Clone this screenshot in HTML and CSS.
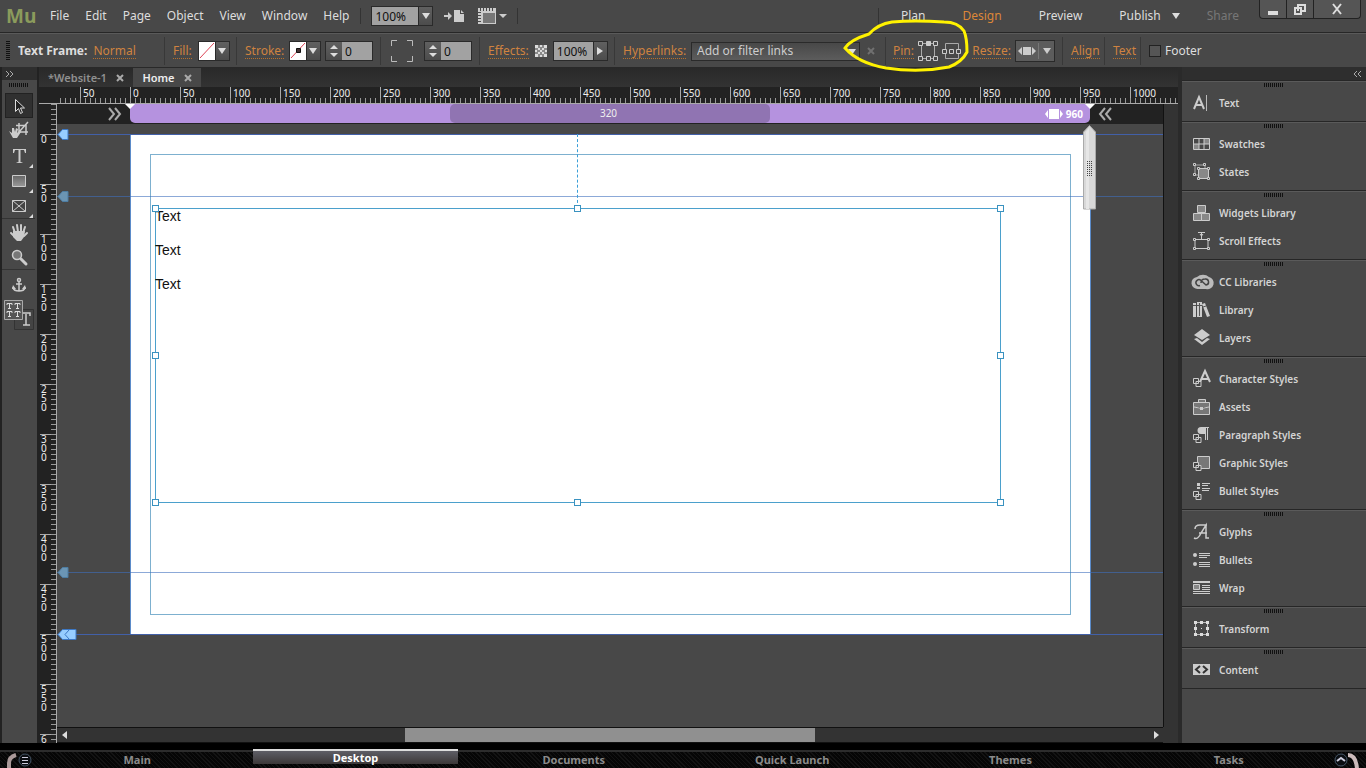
FILE: index.html
```html
<!DOCTYPE html>
<html lang="en">
<head>
<meta charset="utf-8">
<title>Muse - Website-1</title>
<link rel="stylesheet" href="styles.css">
</head>
<body>
<header class="menubar">
  <span class="logo">Mu</span>
  <nav class="menus">
    <button>File</button><button>Edit</button><button>Page</button><button>Object</button><button>View</button><button>Window</button><button>Help</button>
  </nav>
  <div class="zoombox">
    <input class="field zoomfield" aria-label="Zoom" value="100%">
    <button class="drop" aria-label="Zoom levels"><svg width="8" height="6"><path d="M0 0h8L4 6z"/></svg></button>
  </div>
  <div class="menu-icons">
    <button aria-label="Place file"><svg width="20" height="14" class="ic"><path d="M0 6h4V3l4 4-4 4V8H0zM10 1h6v4h4v8H10zM17 1l3 3h-3z"/></svg></button>
    <button aria-label="View options"><svg width="30" height="16" class="ic"><path fill-rule="evenodd" d="M0 0h18v16H0zM5 5v10h12V5zM2 0h1v3H2zM5 0h1v3H5zM8 0h1v3H8zM11 0h1v3h-1zM14 0h1v3h-1zM0 4h3v1H0zM0 7h3v1H0zM0 10h3v1H0zM0 13h3v1H0z"/><path d="M5 5h12v10H5z" fill="#777"/><path d="M21 6h8l-4 4z"/></svg></button>
  </div>
  <div class="modes">
    <button>Plan</button><button class="on">Design</button><button>Preview</button><button>Publish<svg width="8" height="6"><path d="M0 0h8L4 6z"/></svg></button><button class="off">Share</button>
  </div>
  <div class="winbtns">
    <button aria-label="Minimize"><svg width="12" height="14"><path d="M1 9h10v4H1z"/></svg></button>
    <button aria-label="Restore"><svg width="14" height="14"><path fill="none" stroke="#ddd" stroke-width="2" d="M5 9V3h7v6H8M2 6h6v6H2z"/></svg></button>
    <button aria-label="Close" class="wide"><svg width="12" height="12"><path fill="none" stroke="#ddd" stroke-width="2" d="M2 1l8 10M10 1L2 11"/></svg></button>
  </div>
</header>

<section class="control">
  <div class="group g-frame"><i class="vgrip"></i><b>Text Frame:</b><a href="#">Normal</a></div>
  <div class="group g-fill"><a href="#">Fill:</a>
    <div class="combo"><span class="swatch"><svg width="16" height="18"><path d="M1 16L15 1" stroke="#d45" fill="none"/></svg></span><button class="drop" aria-label="Fill"><svg width="8" height="6"><path d="M0 0h8L4 6z"/></svg></button></div></div>
  <div class="group g-stroke"><a href="#">Stroke:</a>
    <div class="combo"><span class="swatch"><svg width="16" height="18"><path d="M1 16L15 1" stroke="#d45" fill="none"/><path d="M6.500 6.500h4v4h-4z" fill="#433" stroke="#111"/></svg></span><button class="drop" aria-label="Stroke"><svg width="8" height="6"><path d="M0 0h8L4 6z"/></svg></button></div>
    <div class="combo"><button class="drop step" aria-label="Stroke width steps"><svg width="8" height="14"><path d="M0 5l4-4 4 4zM0 9h8l-4 4z"/></svg></button><input class="field num" aria-label="Stroke width" value="0"></div></div>
  <div class="group g-corner"><svg width="24" height="24"><path fill="none" stroke="#bbb" d="M1.500 7V1.500H7M17 1.500h5.500V7M1.500 17v5.500H7M17 22.500h5.500V17"/></svg>
    <div class="combo"><button class="drop step" aria-label="Corner radius steps"><svg width="8" height="14"><path d="M0 5l4-4 4 4zM0 9h8l-4 4z"/></svg></button><input class="field num" aria-label="Corner radius" value="0"></div></div>
  <div class="group g-fx"><a href="#">Effects:</a><svg width="12" height="12"><path fill="#8a8a8a" d="M0 0h12v12H0z"/><path fill="#ddd" d="M0 0h3v3H0zM5 0h2v2H5zM9 0h3v3H9zM3 3h2v2H3zM7 3h2v2H7zM0 5h2v2H0zM5 5h2v2H5zM10 5h2v2h-2zM3 7h2v2H3zM7 7h2v2H7zM0 9h3v3H0zM5 10h2v2H5zM9 9h3v3H9z"/></svg>
    <div class="combo"><input class="field pct" aria-label="Opacity" value="100%"><button class="drop" aria-label="Opacity slider"><svg width="6" height="8"><path d="M0 0l6 4-6 4z"/></svg></button></div></div>
  <div class="group g-link"><a href="#" id="hl">Hyperlinks:</a>
    <span class="linkbox"><select class="links" aria-labelledby="hl"><option>Add or filter links</option></select></span>
    <button class="clear" aria-label="Remove link"><svg width="8" height="8"><path fill="none" stroke="#707070" stroke-width="2" d="M1 1l6 6M7 1L1 7"/></svg></button></div>
  <div class="group g-pin"><a href="#">Pin:</a>
    <svg width="20" height="20"><g fill="none" stroke="#ccc"><path d="M5 2.500h10M5 17.500h10M3.500 5v10M16.500 5v10" stroke="#aaa"/><path d="M.5.500h4v4h-4zM15.500.500h4v4h-4zM.5 15.500h4v4h-4zM15.500 15.500h4v4h-4zM8.500 15.500h4v4h-4z" fill="#484848"/><path d="M8.500.500h4v4h-4z" fill="#ccc"/></g></svg>
    <svg width="20" height="20"><g fill="none" stroke="#ccc"><path d="M3.500 8V2.500h13V8M3.500 12v5.500h13V12" stroke="#aaa"/><path d="M.5 8.500h4v4h-4zM7.500 8.500h4v4h-4zM14.500 8.500h4v4h-4z"/></g></svg>
    <a href="#" class="resize">Resize:</a>
    <button class="resizebtn" aria-label="Resize mode"><svg width="34" height="18"><path fill="#ccc" d="M5 5h8v8H5zM0 9l4-4v8zM18 9l-4-4v8z"/><path stroke="#777" d="M20.500 1v16"/><path fill="#ccc" d="M25 6h8l-4 6z"/></svg></button></div>
  <div class="group g-align"><a href="#">Align</a></div>
  <div class="group g-text"><a href="#">Text</a></div>
  <div class="group g-footer"><label><input type="checkbox">Footer</label></div>
</section>

<main class="work">
  <aside class="tools">
    <div class="strip"><svg width="8" height="6"><path d="M0 0l3 3-3 3M4 0l3 3-3 3" fill="none" stroke="#aaa"/></svg></div>
    <i class="grip"></i>
    <button class="sel" aria-label="Selection"><svg width="20" height="20"><path d="M6.500 3.500v12l3-3 2 5 2-1-2-4.500h4z" fill="#222" stroke="#ddd"/></svg></button>
    <button aria-label="Crop"><svg width="22" height="20"><path d="M11 2v9h9M8 4.500h10V14M20 1l-9 10" fill="none" stroke="#ccc" stroke-width="1.500"/><path fill="#ccc" d="M1 10l3 2V7h2l1 4 1-4 2 1-1 4 2-2 2 1-4 6H5z"/></svg></button>
    <button aria-label="Text" class="more"><svg width="20" height="20"><path fill="#ccc" d="M4 3h13v4h-1l-1-3h-3.500v12l2 .5v.5H7.500v-.5l2-.5V4H6L5 7H4z"/></svg></button>
    <button aria-label="Rectangle" class="more"><svg width="20" height="20"><defs><linearGradient id="rg" x2="0" y2="1"><stop stop-color="#666"/><stop offset="1" stop-color="#999"/></linearGradient></defs><path d="M3.500 4.500h13v11h-13z" fill="url(#rg)" stroke="#ccc"/></svg></button>
    <button aria-label="Rectangle frame" class="more"><svg width="20" height="20"><path d="M3.500 4.500h13v11h-13zl13 11M16.500 4.500l-13 11" fill="#444" stroke="#ccc"/></svg></button>
    <hr>
    <button aria-label="Hand"><svg width="20" height="20"><path fill="none" stroke="#ccc" stroke-width="2" stroke-linecap="round" d="M6 11L4 5M9 10L8 3M12 10V3M14 11l2-6M5 14l-3-3M15 14l3-3"/><path fill="#ccc" d="M4 9h12l-1 6-3 4H8l-4-4z"/></svg></button>
    <button aria-label="Zoom tool"><svg width="20" height="20"><circle cx="8" cy="8" r="4.500" fill="#777" stroke="#ccc" stroke-width="1.500"/><path d="M12 12l5 5" stroke="#ccc" stroke-width="3" stroke-linecap="round"/></svg></button>
    <hr>
    <button aria-label="Anchor" class="anchor"><svg width="20" height="20"><g fill="none" stroke="#ccc" stroke-width="1.500"><circle cx="10" cy="5" r="1.500"/><path d="M10 7v9M7 9h6M4 12v1q1 3 6 3t6-3v-1"/></g><path fill="#ccc" d="M3 14l1-4 3 4zM13 14l3-4 1 4z"/></svg></button>
    <button aria-label="Text styles" class="tt"><svg width="34" height="32"><path d="M12.500 10.500h19v20h-19z" fill="#444" stroke="#333"/><path d="M20 14h8v3M24 15v11M21 26h7" fill="none" stroke="#ccc" stroke-width="1.500"/><path d="M2.500 1.500h18v19h-18z" fill="#555" stroke="#aaa"/><path fill="none" stroke="#ddd" d="M5 6V4.500h5V6M7.500 4v5M6 9.500h3M13 6V4.500h5V6M15.500 4v5M14 9.500h3M5 14v-1.500h5V14M7.500 12v5M6 17.500h3M13 14v-1.500h5V14M15.500 12v5M14 17.500h3"/></svg></button>
  </aside>

  <section class="doc">
    <div class="tabs" role="tablist">
      <button role="tab" class="tab">*Website-1<svg width="8" height="8"><path d="M1 1l6 6M7 1L1 7"/></svg></button>
      <button role="tab" class="tab active">Home<svg width="8" height="8"><path d="M1 1l6 6M7 1L1 7"/></svg></button>
    </div>
    <div class="hruler"><span>50</span><span>0</span><span>50</span><span>100</span><span>150</span><span>200</span><span>250</span><span>300</span><span>350</span><span>400</span><span>450</span><span>500</span><span>550</span><span>600</span><span>650</span><span>700</span><span>750</span><span>800</span><span>850</span><span>900</span><span>950</span><span>1000</span></div>
    <div class="body">
      <div class="vruler"><span>0</span><span>50</span><span>100</span><span>150</span><span>200</span><span>250</span><span>300</span><span>350</span><span>400</span><span>450</span><span>500</span><span>550</span><span>600</span></div>
      <div class="view">
        <div class="break">
          <svg width="13" height="14"><path d="M1 1l5 6-5 6M7 1l5 6-5 6" fill="none" stroke="#aaa" stroke-width="2"/></svg>
          <div class="range">
            <i class="notch"></i>
            <span class="inner">320</span>
            <span class="max"><svg width="20" height="10"><path d="M1 5l3-4v8zM5 0h10v10H5zM19 5l-3-4v8z" fill="#fff"/></svg>960</span>
            <i class="notch end"></i>
          </div>
          <svg width="13" height="14"><path d="M6 1L1 7l5 6M12 1L7 7l5 6" fill="none" stroke="#aaa" stroke-width="2"/></svg>
        </div>
        <div class="canvas">
          <div class="page"><div class="margins"></div></div>
          <i class="guide u1"></i><i class="guide dim u2"></i><i class="guide dim u3"></i><i class="guide u4"></i>
          <svg class="flag u1" width="12" height="11"><path d="M1 5.500L5.500.500H11v10H5.500z"/></svg>
          <svg class="flag dim u2" width="12" height="11"><path d="M1 5.500L5.500.500H11v10H5.500z"/></svg>
          <svg class="flag dim u3" width="12" height="11"><path d="M1 5.500L5.500.500H11v10H5.500z"/></svg>
          <svg class="flag u4" width="20" height="11"><path d="M1 5.500L5.500.500H19v10H5.500z"/><path d="M12 1L8 5.500l4 4.500" fill="none"/></svg>
          <i class="snap"></i>
          <div class="frame">
            <p>Text</p><p>Text</p><p>Text</p>
            <i class="h nw"></i><i class="h n"></i><i class="h ne"></i><i class="h w"></i><i class="h e"></i><i class="h sw"></i><i class="h s"></i><i class="h se"></i>
          </div>
          <svg class="scrub" width="15" height="86"><path d="M1.500 84V7L7.500.500 13.500 7v77z" fill="#d8d8d8" stroke="#aaa"/><path d="M4 84V7l3-4v81z" fill="#e6e6e6"/><path d="M5.500 36v15M7.500 36v15M9.500 36v15" stroke="#444" stroke-dasharray="1 1"/></svg>
        </div>
        <div class="hscroll"><button aria-label="Scroll left"><svg width="5" height="8"><path d="M5 0v8L0 4z"/></svg></button><div class="track"><i class="thumb"></i></div><button aria-label="Scroll right"><svg width="5" height="8"><path d="M0 0v8l5-4z"/></svg></button></div>
      </div>
      <div class="vscroll"></div>
    </div>
  </section>

  <aside class="panels">
    <div class="strip"><svg width="8" height="6"><path d="M3 0L0 3l3 3M7 0L4 3l3 3" fill="none" stroke="#aaa"/></svg></div>
    <div class="pg"><button><svg width="20" height="20"><path d="M2 16L7 4l5 12M4 12h6" fill="none" stroke="#ccc" stroke-width="2"/><path d="M14.500 2v16" stroke="#bbb"/></svg>Text</button></div>
    <div class="pg">
      <button><svg width="20" height="20"><path fill="#888" d="M2 10h5v5H2zM12 5h5v5h-5z"/><path d="M1.500 4.500h16v11h-16zM1.500 10h16M7 4.500v11M12 4.500v11" fill="none" stroke="#ccc"/></svg>Swatches</button>
      <button><svg width="20" height="20"><path d="M3 3h10v10H3z" fill="none" stroke="#aaa"/><path d="M6.500 6.500h10v10h-10z" fill="#888" stroke="#ccc"/><g fill="#444" stroke="#ccc"><path d="M1.500 1.500h2v2h-2zM11.500 1.500h2v2h-2zM1.500 11.500h2v2h-2zM5.500 5.500h2v2h-2zM15.500 5.500h2v2h-2zM5.500 15.500h2v2h-2zM15.500 15.500h2v2h-2z"/></g></svg>States</button></div>
    <div class="pg">
      <button><svg width="20" height="20"><path d="M5.500 2.500h8v7h-8zM1.500 10.500h8v7h-8zM9.500 10.500h8v7h-8z" fill="#888" stroke="#ccc"/></svg>Widgets Library</button>
      <button><svg width="20" height="20"><g fill="#444" stroke="#ccc"><path d="M3 8.500h13v9H3z"/><path d="M1.500 7.500h2v2h-2zM15.500 7.500h2v2h-2zM1.500 16.500h2v2h-2zM15.500 16.500h2v2h-2z"/><path d="M9.500 8V2M6 1.500h7M8 3l1.500 2L11 3" fill="none"/></g></svg>Scroll Effects</button></div>
    <div class="pg">
      <button><svg width="20" height="20"><path fill="#bbb" d="M6 17a6 6 0 0 1-1-12 8 7 0 0 1 12 0 6 6 0 0 1-3 12z"/><path d="M8 13.500a3 3 0 1 1 1-5l5 4.500a3 3 0 1 0-1-6q-4 0-4 4" fill="none" stroke="#444" stroke-width="1.500"/></svg>CC Libraries</button>
      <button><svg width="20" height="20"><path fill="#ccc" d="M1 3h3v14H1zM5 2h5v15H5zM10 4l3-1 5 13-3 1z"/><path stroke="#555" d="M1 5.500h3M5 5.500h5M7.500 3v13M11 7l3-1"/></svg>Library</button>
      <button><svg width="20" height="20"><path fill="#ccc" d="M10 1l8 6-8 5-8-5zM2 11l3-1 5 4 5-4 3 1-8 6z"/></svg>Layers</button></div>
    <div class="pg">
      <button><svg width="20" height="20"><path d="M8 13l5-11 5 11M10 10h6" fill="none" stroke="#ccc" stroke-width="2"/><path d="M4 12.500h5v5H4zM1.500 9.500h5v5h-5z" fill="#444" stroke="#ccc"/></svg>Character Styles</button>
      <button><svg width="20" height="20"><path d="M1.500 5.500h16v12h-16zM6.500 5V2.500h7V5M2 10q8 3 15 0" fill="#777" stroke="#ccc"/><path d="M8 10h3v3H8z" fill="#ccc"/></svg>Assets</button>
      <button><svg width="20" height="20"><path fill="#ccc" d="M9 2h8v1h-1v12h-1V3h-1v12h-1V9H9a3 3 0 0 1 0-7z"/><path d="M4 12.500h5v5H4zM1.500 9.500h5v5h-5z" fill="#444" stroke="#ccc"/></svg>Paragraph Styles</button>
      <button><svg width="20" height="20"><path d="M5.500 3.500h12v12h-12z" fill="#777" stroke="#ccc"/><path d="M4 12.500h5v5H4zM1.500 9.500h5v5h-5z" fill="#444" stroke="#ccc"/></svg>Graphic Styles</button>
      <button><svg width="20" height="20"><path fill="#ccc" d="M5 2h3v3H5zM5 6h3v2H5zM10 2h8v1h-8zM10 4h6v1h-6zM10 7h8v1h-8zM10 9h7v1h-7z"/><path d="M4 13.500h5v5H4zM1.500 10.500h5v5h-5z" fill="#444" stroke="#ccc"/></svg>Bullet Styles</button></div>
    <div class="pg">
      <button><svg width="20" height="20"><path d="M2 16q4 2 7-5l5-8v13h3M3 7q0-4 5-4h7M7 11h8" fill="none" stroke="#ccc" stroke-width="1.500"/></svg>Glyphs</button>
      <button><svg width="20" height="20"><g fill="#ccc"><circle cx="3" cy="5" r="2"/><circle cx="3" cy="14" r="2"/><path d="M7 3h11v1H7zM7 5h11v1H7zM7 7h8v1H7zM7 12h11v1H7zM7 14h11v1H7zM7 16h11v1H7z"/></g></svg>Bullets</button>
      <button><svg width="20" height="20"><path fill="#ccc" d="M1 3h17v2H1zM1 13h17v1H1zM1 15h17v1H1zM10 7h8v1h-8zM10 9h8v1h-8zM10 11h8v1h-8z"/><path d="M1.500 6.500h6v5h-6z" fill="#888" stroke="#ccc"/></svg>Wrap</button></div>
    <div class="pg"><button><svg width="20" height="20"><path d="M3.500 3.500h12v12h-12z" fill="none" stroke="#bbb"/><path fill="#ddd" d="M2 2h3v3H2zM8 2h3v3H8zM14 2h3v3h-3zM2 8h3v3H2zM14 8h3v3h-3zM2 14h3v3H2zM8 14h3v3H8zM14 14h3v3h-3zM9 9h1v1H9z"/></svg>Transform</button></div>
    <div class="pg last"><button><svg width="20" height="20"><path fill="#ccc" d="M1 4h17v11H1z"/><path d="M8 6L4 9.500 8 13M11 6l4 3.500-4 3.500" fill="none" stroke="#333" stroke-width="2"/></svg>Content</button></div>
  </aside>
</main>

<footer class="dock">
  <svg class="cap" width="32" height="20"><path d="M9 20v-6q0-6 7-8" fill="none" stroke="#a99" stroke-width="4"/><circle cx="25" cy="11" r="6" fill="#0b0e12" stroke="#456"/><path d="M22 8.500h6M22 11.500h6M22 14.500h6" stroke="#ccd"/></svg>
  <nav class="docktabs"><button>Main</button><button class="on">Desktop</button><button>Documents</button><button>Quick Launch</button><button>Themes</button><button>Tasks</button></nav>
  <svg class="cap right" width="32" height="20"><circle cx="3" cy="11" r="6" fill="#0b0e12" stroke="#456"/><path d="M-1 12l4-3 4 3" stroke="#ccd" stroke-width="2" fill="none"/><path d="M10 6q8 0 9 14" fill="none" stroke="#cbb" stroke-width="4"/></svg>
</footer>
<svg class="mark" width="126" height="56"><path d="M1 28Q6 20 25 14Q34 4 48 2Q70 0 100 2Q114 2 120 11Q123 18 123 32Q118 42 105 47Q75 53 42 48Q14 43 1 28z" fill="none" stroke="#fff200" stroke-width="3"/></svg>
</body>
</html>
```
FILE: styles.css
```css
* { box-sizing: border-box; }
body { margin: 0; height: 100vh; overflow: hidden; display: flex; flex-direction: column; background: #484848; color: #ddd; font: 12px/16px "Noto Sans", "Open Sans", sans-serif; position: relative; }
button { font: inherit; color: inherit; background: none; border: 0; padding: 0; margin: 0; display: flex; align-items: center; justify-content: center; }
svg { display: block; flex: none; fill: #ddd; overflow: visible; }
i { display: block; }
input { font: inherit; }

.menubar { flex: none; height: 32px; display: flex; align-items: center; padding-left: 6px; }
.logo { width: 44px; color: #8b9b5c; font: bold 19px/28px "Open Sans", sans-serif; }
.menus { display: flex; gap: 16px; padding-right: 11px; border-right: 1px solid #333; }
.zoombox { display: flex; margin-left: 10px; border: 1px solid #2a2a2a; }
.field { border: 0; margin: 0; padding: 0 3px; color: #111; background: #a2a2a2; height: 18px; border-radius: 0; }
.zoomfield { width: 46px; }
.drop { width: 14px; height: 18px; background: linear-gradient(#606060, #4c4c4c); border-left: 1px solid #2a2a2a; }
.menu-icons { display: flex; gap: 14px; padding: 0 9px 0 11px; border-right: 1px solid #333; }
.ic { fill: #ccc; }
.modes { margin-left: auto; border-left: 1px solid #333; padding-left: 22px; display: flex; gap: 37px; }
.modes button { gap: 11px; }
.modes button.off { margin-left: -10px; }
.on { color: #dd8738; }
.off { color: #777; }
.winbtns { align-self: flex-start; margin: 0 5px 0 20px; display: flex; border: 1px solid #222; border-top: 0; border-radius: 0 0 4px 4px; background: #555; }
.winbtns button { width: 27px; height: 18px; border-right: 1px solid #222; }
.winbtns .wide { width: 46px; border: 0; }

.control { flex: none; height: 35px; padding-top: 2px; display: flex; align-items: center; border-top: 1px solid #272727; box-shadow: inset 0 1px #5a5a5a; }
.group { flex: none; display: flex; align-items: center; gap: 6px; height: 28px; padding: 0 7px 0 8px; border-left: 1px solid #383838; white-space: nowrap; }
.group a { color: #cf8340; text-decoration: none; border-bottom: 1px dotted #b8702c; line-height: 14px; }
.g-frame { width: 164px; border: 0; padding-left: 6px; }
.g-frame b { margin-left: 2px; }
.vgrip { width: 4px; height: 20px; background: repeating-linear-gradient(#111 0 1px, #484848 1px 2px); }
.combo { margin-left: auto; display: flex; border: 1px solid #2a2a2a; }
.swatch { background: #fff; }
.g-fill { width: 72px; }
.g-stroke { width: 144px; gap: 1px; }
.g-corner { width: 99px; padding-left: 9px; }
.g-fx { width: 135px; }
.g-link { width: 271px; gap: 2px; }
.g-pin { width: 177px; gap: 4px; padding-left: 7px; }
.g-align { width: 42px; }
.g-text { width: 36px; }
.step { border: 0; width: 16px; }
.num { width: 30px; }
.pct { width: 39px; }
.linkbox { flex: none; margin-left: auto; width: 169px; position: relative; }
.linkbox::after { content: ""; position: absolute; right: 4px; top: 7px; border: 4px solid transparent; border-top: 6px solid #ddd; border-bottom: 0; pointer-events: none; }
.links { display: block; appearance: none; width: 100%; height: 19px; color: #ccc; font: inherit; border: 1px solid #2a2a2a; border-radius: 0; padding: 0 5px; background: linear-gradient(#484848, #5c5c5c); }
.clear { width: 14px; height: 18px; margin-left: 2px; }
.resize { margin-left: auto; }
.resizebtn { width: 40px; height: 22px; border: 1px solid #2a2a2a; background: #5c5c5c; }
.group label { display: flex; align-items: center; gap: 4px; }
.group input[type=checkbox] { appearance: none; margin: 0; width: 12px; height: 12px; border: 1px solid #222; background: #555; }

.work { flex: 1; min-height: 0; display: flex; }
.strip { height: 13px; background: #2e2e2e; display: flex; align-items: center; padding: 0 4px; }
.tools { flex: none; width: 37px; border-left: 2px solid #222; padding-right: 2px; display: flex; flex-direction: column; align-items: center; }
.tools .strip { align-self: stretch; margin-right: -2px; }
.grip, .pg::before { content: ""; width: 20px; height: 4px; background: repeating-linear-gradient(90deg, #111 0 1px, #484848 1px 2px); }
.tools .grip { margin: 3px 0 6px; }
.tools button { width: 28px; height: 25px; position: relative; }
.tools .sel { background: #303030; border: 1px solid #222; }
.more::after { content: ""; position: absolute; right: 0; bottom: 0; border: 2px solid; border-color: transparent #ddd #ddd transparent; }
.tools hr { width: 33px; margin: 0; border: 0; border-top: 1px solid #333; }
.tools .anchor { height: 29px; }
.tools .tt { width: 34px; height: 32px; }

.doc { flex: 1; min-width: 0; display: flex; flex-direction: column; background: #333; border-left: 2px solid #222; border-right: 4px solid #2a2a2a; }
.tabs { flex: none; height: 20px; display: flex; align-items: flex-end; background: linear-gradient(#292929, #333); font-size: 11px; font-weight: bold; }
.tab { width: 94px; height: 19px; gap: 9px; color: #909090; font-weight: 600; }
.tab.active { width: 68px; background: #484848; color: #eee; }
.tab svg path { fill: none; stroke: #aaa; stroke-width: 2; }
.hruler { flex: none; height: 17px; padding-left: 41px; display: flex; overflow-x: clip; background: #222; border-bottom: 1px solid #aaa; position: relative; }
.hruler::after { content: ""; position: absolute; left: 21px; right: 0; bottom: 0; height: 5px; background: repeating-linear-gradient(90deg, #999 0 1px, transparent 1px 5px); }
.hruler span { flex: none; width: 50px; padding-left: 2px; border-left: 1px solid #aaa; font: 10px/12px "Noto Sans", sans-serif; color: #eee; }
.body { flex: 1; min-height: 0; display: flex; }
.vruler { flex: none; width: 18px; padding-top: 30px; overflow: hidden; background: #222; border-right: 1px solid #aaa; position: relative; }
.vruler::after { content: ""; position: absolute; top: 0; bottom: 0; right: 0; width: 5px; background: repeating-linear-gradient(#999 0 1px, transparent 1px 5px); }
.vruler span { display: block; height: 50px; width: 16px; margin-left: 1px; padding: 0 8px 0 1px; border-top: 1px solid #aaa; font: 10px/9px "Noto Sans", sans-serif; color: #eee; overflow-wrap: anywhere; }
.view { flex: 1; min-width: 0; display: flex; flex-direction: column; }
.break { flex: none; height: 20px; display: flex; align-items: center; gap: 9px; padding-left: 51px; background: #222; }
.range { flex: none; width: 960px; height: 19px; align-self: flex-start; border-radius: 0 0 5px 5px; background: #b592df; display: flex; align-items: center; position: relative; font-size: 10px; color: #eee; }
.inner { margin-left: 320px; width: 320px; height: 19px; padding-right: 3px; line-height: 18px; text-align: center; border-radius: 5px; background: #9074b2; }
.max { margin-left: auto; padding-right: 7px; display: flex; align-items: center; gap: 2px; font-weight: bold; color: #fff; line-height: 16px; }
.notch { position: absolute; top: 0; left: -5px; border: 5px solid transparent; border-top-color: #fff; }
.notch.end { left: auto; right: -5px; }
.canvas { flex: 1; position: relative; overflow: hidden; background: #484848; }
.page { position: absolute; left: 73px; top: 10px; width: 961px; height: 500px; padding: 20px 19px; background: #fff; border: 1px solid #5b8bc9; border-width: 0 1px; }
.margins { height: 461px; border: 1px solid #7db0cf; }
.guide { position: absolute; left: 0; right: 0; height: 1px; background: #4260a8; }
.guide.dim { background: rgba(64, 112, 190, .6); }
.guide.u1 { top: 10px; } .guide.u2 { top: 72px; } .guide.u3 { top: 448px; } .guide.u4 { top: 510px; }
.flag { position: absolute; left: 0; fill: #97cdff; stroke: #3d78c4; }
.flag.dim { fill: #6b95b4; stroke: #4d7da3; }
.flag.u1 { top: 5px; } .flag.u2 { top: 67px; } .flag.u3 { top: 443px; } .flag.u4 { top: 505px; }
.snap { position: absolute; left: 520px; top: 10px; height: 74px; border-left: 1px dashed #3a9fd8; }
.frame { position: absolute; left: 98px; top: 84px; width: 846px; height: 295px; box-shadow: inset 0 0 0 1px #4ba0cc; color: #111; font: 14px/17px "Liberation Sans", Arial, sans-serif; }
.frame p { margin: 0 0 17px; }
.h { position: absolute; width: 7px; height: 7px; border: 1px solid #3a92c0; background: #fff; }
.nw, .w, .sw { left: -3px; } .ne, .e, .se { right: -3px; } .n, .s { left: calc(50% - 4px); }
.nw, .n, .ne { top: -3px; } .sw, .s, .se { bottom: -3px; } .w, .e { top: calc(50% - 4px); }
.scrub { position: absolute; left: 1025px; top: 1px; }
.hscroll { flex: none; height: 16px; display: flex; border: 1px solid #111; border-width: 1px 0; background: #333; }
.hscroll button { width: 14px; }
.track { flex: 1; }
.thumb { width: 38%; height: 14px; margin-left: 31%; background: #909090; }
.vscroll { flex: none; width: 15px; margin-bottom: 16px; border-left: 1px solid #111; background: #333; }

.panels { flex: none; width: 184px; color: #d4d4d4; font-size: 10px; font-weight: 600; }
.panels .strip { justify-content: flex-end; }
.pg { display: flex; flex-direction: column; padding-bottom: 3px; border-top: 1px solid #262626; box-shadow: inset 0 1px #5a5a5a; }
.pg::before { margin: 2px auto 3px 82px; }
.pg button { height: 28px; justify-content: flex-start; gap: 7px; padding: 0 0 2px 10px; }
.last { border-bottom: 1px solid #262626; }

.dock { flex: none; height: 25px; padding-top: 4px; display: flex; background: repeating-linear-gradient(45deg, #060606 0 2px, #131313 2px 3px); border-top: 2px solid #000; box-shadow: inset 0 5px #000, inset 0 7px #2c2c2c; }
.cap { width: 28px; }
.docktabs { flex: 1; display: flex; }
.docktabs button { flex: none; width: calc(100% / 6); padding-top: 2px; color: #8b8b8b; font-weight: bold; font-size: 11px; }
.docktabs .on { width: calc(100% / 6 - 14px); margin: 0 7px 4px; padding: 0; color: #fff; background: linear-gradient(#5e5e66, #3c3838); border-top: 2px solid #ddd; }
.mark { position: absolute; left: 844px; top: 20px; }
```
